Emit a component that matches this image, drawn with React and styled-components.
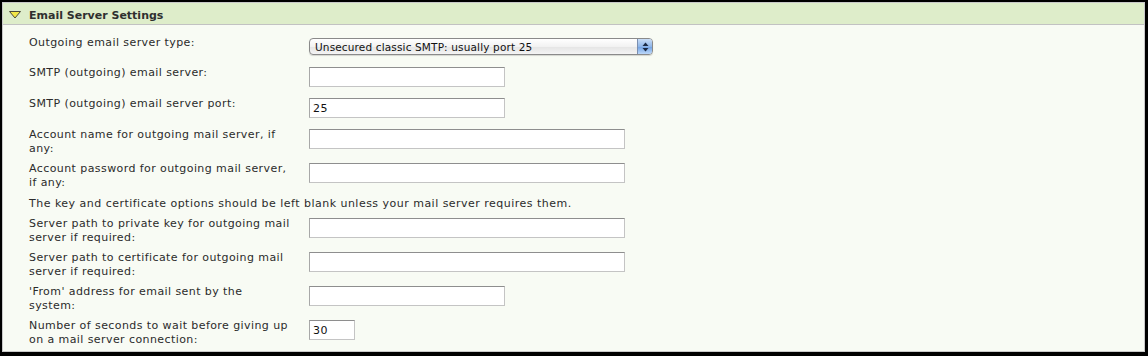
import React from 'react';
import styled, { createGlobalStyle } from 'styled-components';

const GlobalStyle = createGlobalStyle`
  html, body {
    margin: 0;
    padding: 0;
    background: #000;
  }
  body {
    font-family: "DejaVu Sans", Verdana, sans-serif;
    font-size: 11px;
    color: #2b2b2b;
  }
`;

// labels keep the line breaks of the original form
const fields = [
  { label: 'SMTP (outgoing) email server:', size: 'medium', value: '' },
  { label: 'SMTP (outgoing) email server port:', size: 'medium', value: '25' },
  { label: 'Account name for outgoing mail server, if\nany:', size: 'large', value: '' },
  { label: 'Account password for outgoing mail server,\nif any:', size: 'large', value: '' },
];

const keyFields = [
  { label: 'Server path to private key for outgoing mail\nserver if required:', size: 'large', value: '' },
  { label: 'Server path to certificate for outgoing mail\nserver if required:', size: 'large', value: '' },
  { label: "'From' address for email sent by the\nsystem:", size: 'medium', value: '' },
  { label: 'Number of seconds to wait before giving up\non a mail server connection:', size: 'small', value: '30' },
];

const widths = { small: 46, medium: 196, large: 316 };

function Toggle() {
  return (
    <svg width="12" height="8" viewBox="0 0 12 8">
      <polygon points="0.5,0.5 11.5,0.5 6,7" fill="#f3e846" stroke="#4a4a3a" strokeWidth="1" />
    </svg>
  );
}

function Stepper() {
  return (
    <svg width="7" height="10" viewBox="0 0 7 10">
      <polygon points="3.5,0.5 6.5,4 0.5,4" fill="#1b2a44" />
      <polygon points="0.5,6 6.5,6 3.5,9.5" fill="#1b2a44" />
    </svg>
  );
}

function FieldRow({ label, size, value }) {
  return (
    <Row>
      <Label>{label}</Label>
      <TextInput width={widths[size]} defaultValue={value} />
    </Row>
  );
}

export default function App() {
  return (
    <>
      <GlobalStyle />
      <Panel>
        <Header>
          <Toggle />
          <Title>Email Server Settings</Title>
        </Header>
        <Body>
          <Row>
            <Label>Outgoing email server type:</Label>
            <SelectBox>
              <SelectText>Unsecured classic SMTP: usually port 25</SelectText>
              <StepButton>
                <Stepper />
              </StepButton>
            </SelectBox>
          </Row>
          {fields.map((f) => (
            <FieldRow key={f.label} {...f} />
          ))}
          <Note>
            The key and certificate options should be left blank unless your mail server requires them.
          </Note>
          {keyFields.map((f) => (
            <FieldRow key={f.label} {...f} />
          ))}
        </Body>
      </Panel>
    </>
  );
}

const Panel = styled.div`
  margin: 2px 3px 4px 2px;
  height: 348px;
  border: 1px solid #c9c9c9;
  background: #f8fbf4;
  display: flex;
  flex-direction: column;
`;

const Header = styled.div`
  height: 20px;
  padding: 1px 0 0 6px;
  background: #deedca;
  border-bottom: 1px solid #c2c2c2;
  display: flex;
  align-items: center;
  gap: 8px;

  svg {
    margin-top: 1px;
  }
`;

const Title = styled.span`
  font-weight: bold;
  font-size: 11px;
  padding-top: 2px;
  color: #2f2f2f;
`;

const Body = styled.div`
  padding: 7px 0 0 26px;
  display: flex;
  flex-direction: column;
`;

const Row = styled.div`
  display: flex;
  align-items: flex-start;
`;

const Label = styled.div`
  width: 276px;
  margin-right: 4px;
  padding: 4px 0 2px;
  line-height: 14px;
  letter-spacing: 0.42px;
  white-space: pre-line;
  color: #2b2b2b;
`;

const TextInput = styled.input`
  box-sizing: border-box;
  width: ${(p) => p.width}px;
  height: 20px;
  margin: 5px 0 6px;
  padding: 1px 3px 0;
  border: 1px solid #c4c4c4;
  border-top-color: #8e8e8e;
  border-left-color: #a8a8a8;
  background: #fff;
  font-family: "DejaVu Sans", Verdana, sans-serif;
  font-size: 11px;
  letter-spacing: 0.4px;
  color: #111;
  outline: none;
`;

const SelectBox = styled.div`
  box-sizing: border-box;
  width: 344px;
  height: 17px;
  margin: 6px 0 7px;
  border: 1px solid #8a8a8a;
  border-radius: 4px;
  background: linear-gradient(#ffffff, #f2f2f2 50%, #e4e4e4 51%, #f4f4f4);
  display: flex;
  align-items: center;
  justify-content: space-between;
  overflow: hidden;
  box-shadow: 0 1px 1px rgba(0, 0, 0, 0.15);
`;

const SelectText = styled.span`
  padding-left: 5px;
  font-family: "DejaVu Sans", "Lucida Grande", sans-serif;
  font-size: 10.5px;
  letter-spacing: 0.15px;
  color: #111;
`;

const StepButton = styled.div`
  width: 14px;
  height: 100%;
  display: flex;
  align-items: center;
  justify-content: center;
  border-left: 1px solid #7b8fb0;
  background: linear-gradient(#c9ddf6, #8fb6e8 50%, #6fa0e2 51%, #bcd8fa);
`;

const Note = styled.div`
  padding: 5px 0 2px;
  line-height: 14px;
  letter-spacing: 0.48px;
  color: #2b2b2b;
`;
